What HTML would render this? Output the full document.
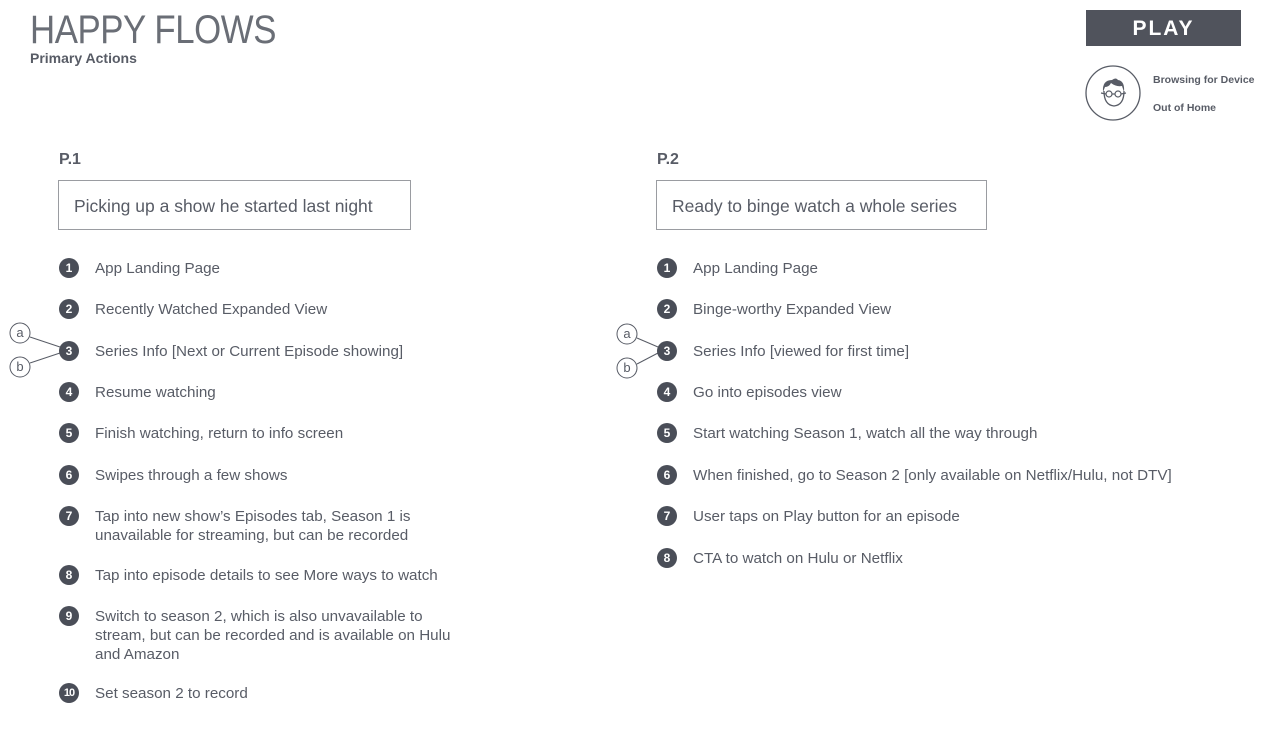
<!DOCTYPE html>
<html><head><meta charset="utf-8"><style>
body{margin:0;width:1280px;height:733px;background:#fff;font-family:"Liberation Sans",sans-serif;color:#585c66;position:relative;overflow:hidden}
.a{position:absolute;white-space:nowrap}
.t{font-size:15.2px;line-height:19px}
.n{position:absolute;width:20px;height:20px;border-radius:50%;background:#4a4e58;color:#fff;font-size:12px;font-weight:bold;text-align:center;line-height:20px}
.box{position:absolute;border:1px solid #9a9ca1;height:50px;font-size:17.5px;line-height:50px;box-sizing:border-box}
</style></head><body>
<div class="a" style="left:30px;top:8px;font-size:40px;font-weight:300;letter-spacing:-0.5px;color:#6a6e76;transform:scaleX(0.87);transform-origin:left top">HAPPY FLOWS</div>
<div class="a" style="left:30px;top:50px;font-size:14px;font-weight:bold">Primary Actions</div>
<div class="a" style="left:1086px;top:10px;width:155px;height:36px;background:#50535c;color:#fff;font-weight:bold;font-size:21px;letter-spacing:2px;text-align:center;line-height:37px">PLAY</div>
<svg class="a" style="left:1084px;top:64px" width="60" height="60" viewBox="0 0 60 60">
<circle cx="29" cy="29" r="27" fill="none" stroke="#585c66" stroke-width="1.3"/>
<path d="M20 27 q0 14 10 15 q10 -1 10 -15" fill="none" stroke="#585c66" stroke-width="1.3"/>
<path d="M19 28 q-1 -12 9 -12 q4 -3 6 0 q7 1 6 12 l-2 -6 q-6 1 -11 -3 q-2 4 -6 4z" fill="#585c66"/>
<circle cx="25" cy="30" r="3" fill="none" stroke="#585c66" stroke-width="1.2"/>
<circle cx="34" cy="30" r="3" fill="none" stroke="#585c66" stroke-width="1.2"/>
<path d="M28 30h3M17 29l5 1M37 30l5-1" stroke="#585c66" stroke-width="1.2"/>
</svg>
<div class="a" style="left:1153px;top:74px;font-size:10.5px;font-weight:bold">Browsing for Device</div>
<div class="a" style="left:1153px;top:102px;font-size:10.5px;font-weight:bold">Out of Home</div>

<div class="a" style="left:59px;top:151px;font-size:16px;font-weight:bold">P.1</div>
<div class="box" style="left:58px;top:180px;width:353px;padding-left:15px">Picking up a show he started last night</div>
<div class="a" style="left:657px;top:151px;font-size:16px;font-weight:bold">P.2</div>
<div class="box" style="left:656px;top:180px;width:331px;padding-left:15px">Ready to binge watch a whole series</div>

<svg class="a" style="left:0;top:0" width="1280" height="733">
<g fill="#fff" stroke="#585c66" stroke-width="1">
<line x1="30" y1="337" x2="60" y2="347"/><line x1="30" y1="363" x2="60" y2="353"/>
<line x1="637" y1="338" x2="658" y2="347"/><line x1="637" y1="364" x2="658" y2="353"/>
<circle cx="20" cy="333" r="10"/><circle cx="20" cy="367" r="10"/>
<circle cx="627" cy="334" r="10"/><circle cx="627" cy="368" r="10"/>
</g>
<g font-family="Liberation Sans" font-size="13" fill="#585c66" text-anchor="middle">
<text x="20" y="337">a</text><text x="20" y="371">b</text>
<text x="627" y="338">a</text><text x="627" y="372">b</text>
</g>
</svg>

<div class="n" style="left:59px;top:258px">1</div><div class="a t" style="left:95px;top:259px">App Landing Page</div>
<div class="n" style="left:59px;top:299px">2</div><div class="a t" style="left:95px;top:300px">Recently Watched Expanded View</div>
<div class="n" style="left:59px;top:341px">3</div><div class="a t" style="left:95px;top:342px">Series Info [Next or Current Episode showing]</div>
<div class="n" style="left:59px;top:382px">4</div><div class="a t" style="left:95px;top:383px">Resume watching</div>
<div class="n" style="left:59px;top:423px">5</div><div class="a t" style="left:95px;top:424px">Finish watching, return to info screen</div>
<div class="n" style="left:59px;top:465px">6</div><div class="a t" style="left:95px;top:466px">Swipes through a few shows</div>
<div class="n" style="left:59px;top:506px">7</div><div class="a t" style="left:95px;top:507px">Tap into new show’s Episodes tab, Season 1 is<br>unavailable for streaming, but can be recorded</div>
<div class="n" style="left:59px;top:565px">8</div><div class="a t" style="left:95px;top:566px">Tap into episode details to see More ways to watch</div>
<div class="n" style="left:59px;top:606px">9</div><div class="a t" style="left:95px;top:607px">Switch to season 2, which is also unvavailable to<br>stream, but can be recorded and is available on Hulu<br>and Amazon</div>
<div class="n" style="left:59px;top:683px;font-size:11px;letter-spacing:-1px">10</div><div class="a t" style="left:95px;top:684px">Set season 2 to record</div>

<div class="n" style="left:657px;top:258px">1</div><div class="a t" style="left:693px;top:259px">App Landing Page</div>
<div class="n" style="left:657px;top:299px">2</div><div class="a t" style="left:693px;top:300px">Binge-worthy Expanded View</div>
<div class="n" style="left:657px;top:341px">3</div><div class="a t" style="left:693px;top:342px">Series Info [viewed for first time]</div>
<div class="n" style="left:657px;top:382px">4</div><div class="a t" style="left:693px;top:383px">Go into episodes view</div>
<div class="n" style="left:657px;top:423px">5</div><div class="a t" style="left:693px;top:424px">Start watching Season 1, watch all the way through</div>
<div class="n" style="left:657px;top:465px">6</div><div class="a t" style="left:693px;top:466px">When finished, go to Season 2 [only available on Netflix/Hulu, not DTV]</div>
<div class="n" style="left:657px;top:506px">7</div><div class="a t" style="left:693px;top:507px">User taps on Play button for an episode</div>
<div class="n" style="left:657px;top:548px">8</div><div class="a t" style="left:693px;top:549px">CTA to watch on Hulu or Netflix</div>
</body></html>
